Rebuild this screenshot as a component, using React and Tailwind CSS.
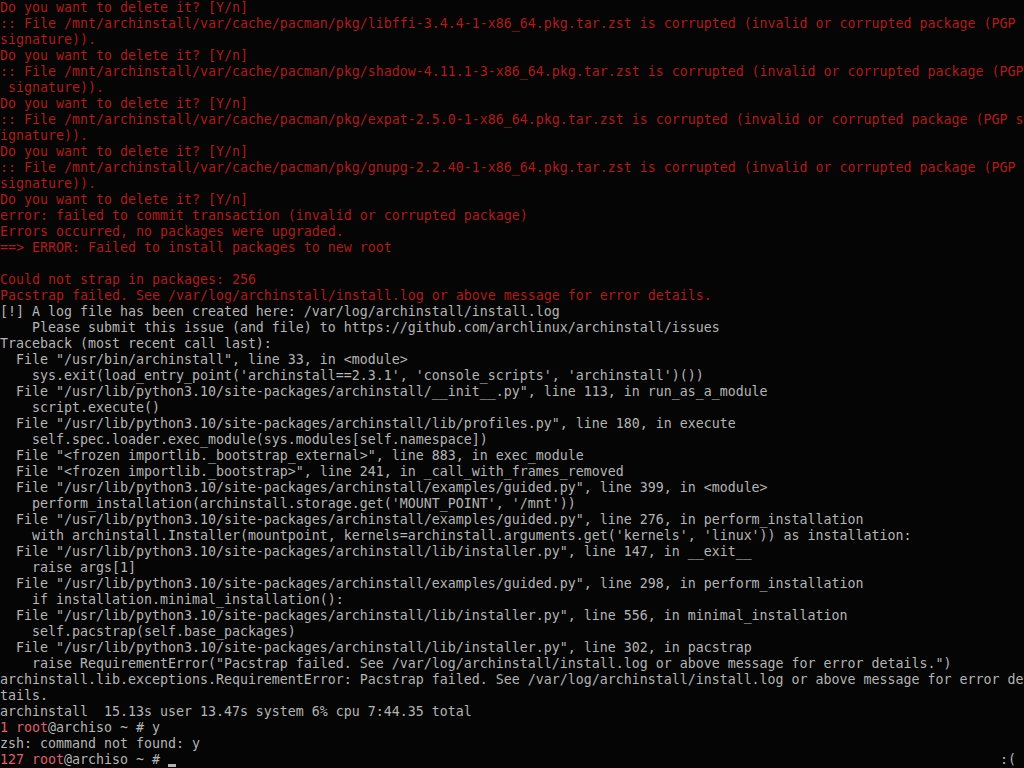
import React from "react";

const R = "r"; // dark red
const G = "g"; // gray
const P = "p"; // bright red prompt

const lines = [
  [[R, "Do you want to delete it? [Y/n]"]],
  [[R, ":: File /mnt/archinstall/var/cache/pacman/pkg/libffi-3.4.4-1-x86_64.pkg.tar.zst is corrupted (invalid or corrupted package (PGP "]],
  [[R, "signature))."]],
  [[R, "Do you want to delete it? [Y/n]"]],
  [[R, ":: File /mnt/archinstall/var/cache/pacman/pkg/shadow-4.11.1-3-x86_64.pkg.tar.zst is corrupted (invalid or corrupted package (PGP"]],
  [[R, " signature))."]],
  [[R, "Do you want to delete it? [Y/n]"]],
  [[R, ":: File /mnt/archinstall/var/cache/pacman/pkg/expat-2.5.0-1-x86_64.pkg.tar.zst is corrupted (invalid or corrupted package (PGP s"]],
  [[R, "ignature))."]],
  [[R, "Do you want to delete it? [Y/n]"]],
  [[R, ":: File /mnt/archinstall/var/cache/pacman/pkg/gnupg-2.2.40-1-x86_64.pkg.tar.zst is corrupted (invalid or corrupted package (PGP "]],
  [[R, "signature))."]],
  [[R, "Do you want to delete it? [Y/n]"]],
  [[R, "error: failed to commit transaction (invalid or corrupted package)"]],
  [[R, "Errors occurred, no packages were upgraded."]],
  [[R, "==> ERROR: Failed to install packages to new root"]],
  [[R, ""]],
  [[R, "Could not strap in packages: 256"]],
  [[R, "Pacstrap failed. See /var/log/archinstall/install.log or above message for error details."]],
  [[G, "[!] A log file has been created here: /var/log/archinstall/install.log"]],
  [[G, "    Please submit this issue (and file) to https://github.com/archlinux/archinstall/issues"]],
  [[G, "Traceback (most recent call last):"]],
  [[G, "  File \"/usr/bin/archinstall\", line 33, in <module>"]],
  [[G, "    sys.exit(load_entry_point('archinstall==2.3.1', 'console_scripts', 'archinstall')())"]],
  [[G, "  File \"/usr/lib/python3.10/site-packages/archinstall/__init__.py\", line 113, in run_as_a_module"]],
  [[G, "    script.execute()"]],
  [[G, "  File \"/usr/lib/python3.10/site-packages/archinstall/lib/profiles.py\", line 180, in execute"]],
  [[G, "    self.spec.loader.exec_module(sys.modules[self.namespace])"]],
  [[G, "  File \"<frozen importlib._bootstrap_external>\", line 883, in exec_module"]],
  [[G, "  File \"<frozen importlib._bootstrap>\", line 241, in _call_with_frames_removed"]],
  [[G, "  File \"/usr/lib/python3.10/site-packages/archinstall/examples/guided.py\", line 399, in <module>"]],
  [[G, "    perform_installation(archinstall.storage.get('MOUNT_POINT', '/mnt'))"]],
  [[G, "  File \"/usr/lib/python3.10/site-packages/archinstall/examples/guided.py\", line 276, in perform_installation"]],
  [[G, "    with archinstall.Installer(mountpoint, kernels=archinstall.arguments.get('kernels', 'linux')) as installation:"]],
  [[G, "  File \"/usr/lib/python3.10/site-packages/archinstall/lib/installer.py\", line 147, in __exit__"]],
  [[G, "    raise args[1]"]],
  [[G, "  File \"/usr/lib/python3.10/site-packages/archinstall/examples/guided.py\", line 298, in perform_installation"]],
  [[G, "    if installation.minimal_installation():"]],
  [[G, "  File \"/usr/lib/python3.10/site-packages/archinstall/lib/installer.py\", line 556, in minimal_installation"]],
  [[G, "    self.pacstrap(self.base_packages)"]],
  [[G, "  File \"/usr/lib/python3.10/site-packages/archinstall/lib/installer.py\", line 302, in pacstrap"]],
  [[G, "    raise RequirementError(\"Pacstrap failed. See /var/log/archinstall/install.log or above message for error details.\")"]],
  [[G, "archinstall.lib.exceptions.RequirementError: Pacstrap failed. See /var/log/archinstall/install.log or above message for error de"]],
  [[G, "tails."]],
  [[G, "archinstall  15.13s user 13.47s system 6% cpu 7:44.35 total"]],
  [[P, "1 root"], [G, "@archiso ~ # y"]],
  [[G, "zsh: command not found: y"]],
];

const cls = {
  r: "text-[#b01a1a]",
  g: "text-[#b4b4b4]",
  p: "text-[#e0606a]",
};

export default function App() {
  return (
    <div
      className="w-[1024px] h-[768px] bg-[#050505] overflow-hidden text-[13.29px] leading-4 whitespace-pre"
      style={{ fontFamily: '"DejaVu Sans Mono", "Liberation Mono", monospace' }}
    >
      {lines.map((segs, i) => (
        <div key={i} className="h-4">
          {segs.map(([c, t], j) => (
            <span key={j} className={cls[c]}>
              {t}
            </span>
          ))}
        </div>
      ))}
      <div className="h-4 flex">
        <span className={cls.p}>127 root</span>
        <span className={cls.g}>@archiso ~ # </span>
        <span className="w-2 h-4 flex flex-col justify-end pb-[1px]">
          <span className="block w-2 h-[3px] bg-[#b4b4b4]" />
        </span>
        <span className="flex-1" />
        <span className={cls.g}>:( </span>
      </div>
    </div>
  );
}
